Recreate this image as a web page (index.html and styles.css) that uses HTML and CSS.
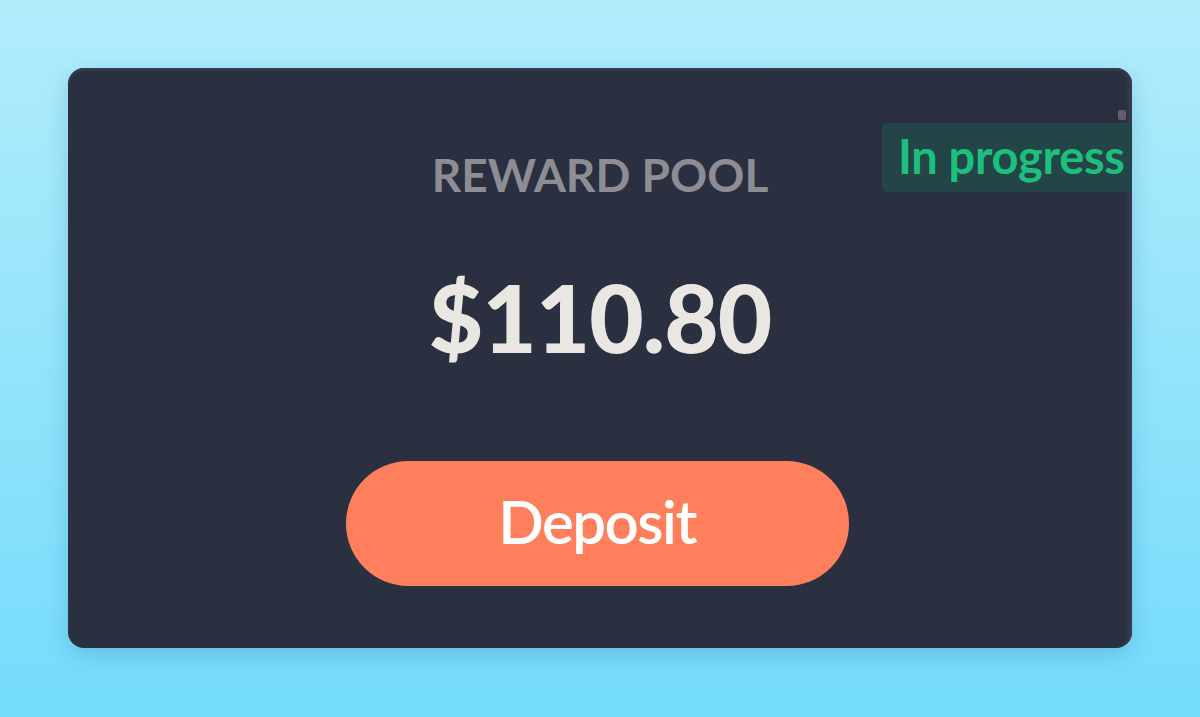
FILE: index.html
```html
<!DOCTYPE html>
<html lang="en">
<head>
<meta charset="UTF-8">
<meta name="viewport" content="width=device-width, initial-scale=1.0">
<title>Reward Pool</title>
<link rel="stylesheet" href="styles.css">
</head>
<body>
<div class="card">
    <div class="scroll-thumb"></div>
    <span class="badge">In progress</span>
    <h3 class="label">REWARD POOL</h3>
    <p class="amount">$110.80</p>
    <button type="button" class="deposit">Deposit</button>
</div>
</body>
</html>
```

FILE: styles.css
```css
html, body {
    height: 100%;
}

body {
    font-family: Lato, "Noto Sans", sans-serif;
    margin: 0;
    padding: 68px;
    box-sizing: border-box;
    background: linear-gradient(180deg, #b2ecfb 0%, #74dcfb 100%);
}

.card {
    position: relative;
    height: 580px;
    background-color: #2b3040;
    border-radius: 16px;
    box-shadow: inset 0 3px 3px -1px #3a3e55, inset -8px 0 3px -4px #383b52, 0 8px 22px rgba(40, 110, 150, 0.25);
    display: flex;
    flex-direction: column;
    align-items: center;
    overflow: hidden;
}

.scroll-thumb {
    position: absolute;
    top: 42px;
    right: 6px;
    width: 8px;
    height: 10px;
    background-color: #5d606d;
    border-radius: 2px;
}

.badge {
    position: absolute;
    top: 55px;
    left: 814px;
    right: 0;
    padding-left: 16px;
    height: 69px;
    line-height: 66px;
    background-color: #244548;
    color: #1dbf7d;
    font-weight: bold;
    font-size: 47px;
    letter-spacing: -0.3px;
    border-radius: 5px 0 0 5px;
    white-space: nowrap;
    overflow: hidden;
}

.label {
    margin: 84px 0 0;
    color: #8d8e93;
    font-size: 46px;
    font-weight: bold;
    letter-spacing: 0;
    line-height: 46px;
}

.amount {
    margin: 72px 0 0;
    color: #eae7e2;
    font-size: 94px;
    font-weight: 900;
    line-height: 94px;
    letter-spacing: -1px;
}

.deposit {
    margin: 97px 6px 0 0;
    width: 503px;
    height: 125px;
    border: none;
    border-radius: 63px;
    background-color: #fe7f5b;
    color: #fff;
    font-family: Lato, "Noto Sans", sans-serif;
    font-size: 60px;
    font-weight: 600;
    letter-spacing: -1.5px;
    padding: 0 0 6px;
    cursor: pointer;
}
```
